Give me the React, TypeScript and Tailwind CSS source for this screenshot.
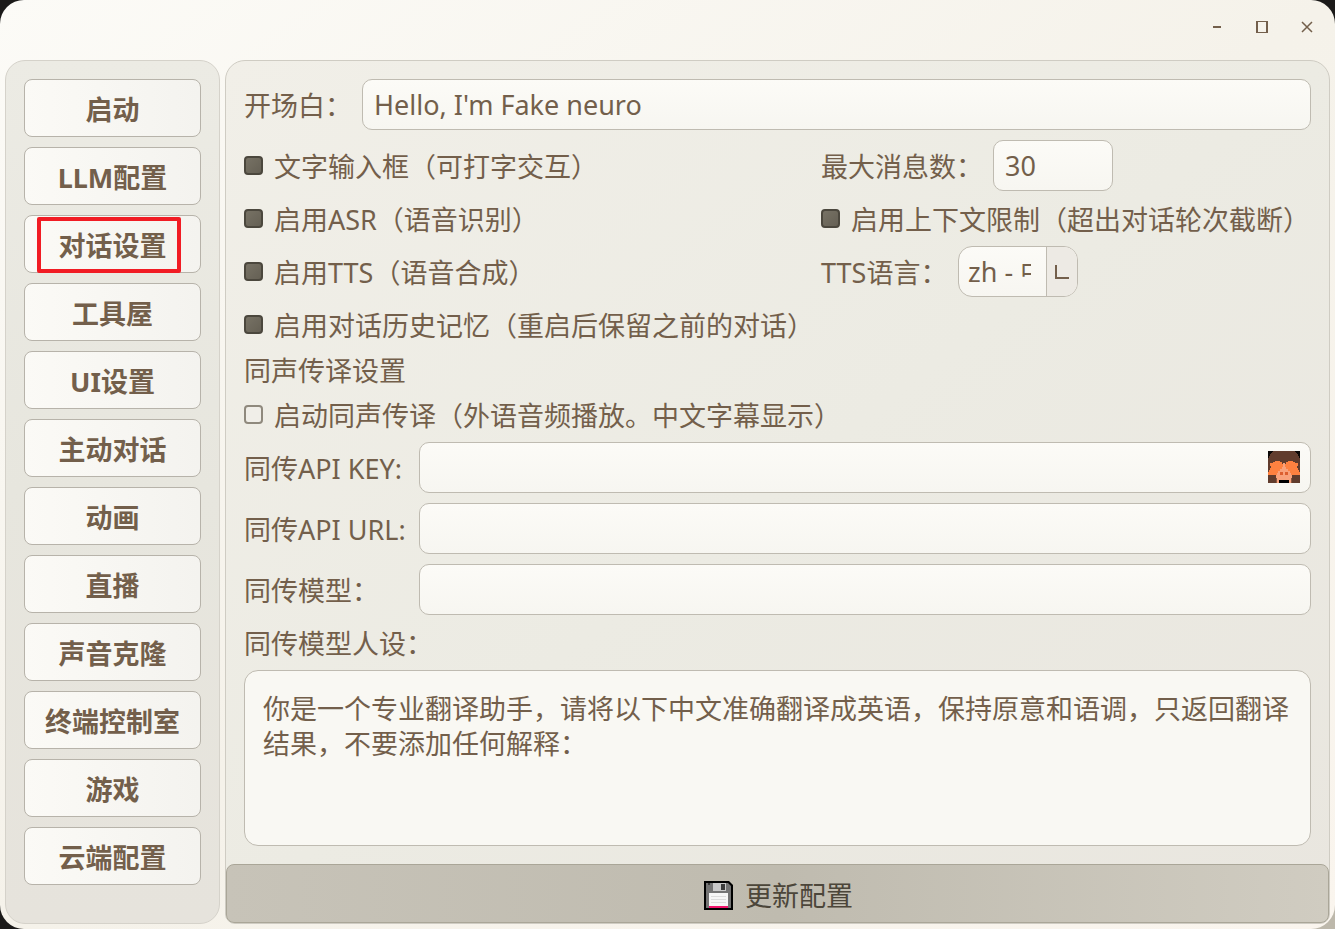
import { useState, type ReactNode } from "react";

const navItems = [
  "启动",
  "LLM配置",
  "对话设置",
  "工具屋",
  "UI设置",
  "主动对话",
  "动画",
  "直播",
  "声音克隆",
  "终端控制室",
  "游戏",
  "云端配置",
];

const fieldClass =
  "h-[51px] min-w-0 rounded-[10px] border border-[#bfbbb1] bg-linear-to-b from-[#fcfbf7] to-[#f7f6f1] px-[11px] outline-none";

function Check({ label, initial = false }: { label: string; initial?: boolean }) {
  const [on, setOn] = useState(initial);
  return (
    <label className="flex h-[35px] items-center gap-[11px] whitespace-nowrap">
      <input
        type="checkbox"
        checked={on}
        onChange={() => setOn(!on)}
        className="size-[19px] shrink-0 appearance-none rounded-[4px] border-2 border-[#8f897d] bg-[#f0eee8] checked:border-[#4b473d] checked:bg-linear-to-br checked:from-[#777265] checked:to-[#656054]"
      />
      <span className="pt-[2px]">{label}</span>
    </label>
  );
}

function LabeledField({ id, label, children }: { id: string; label: string; children: ReactNode }) {
  return (
    <div className="flex items-center">
      <label htmlFor={id} className="w-[175px] shrink-0 pt-[2px] whitespace-nowrap">
        {label}
      </label>
      {children}
    </div>
  );
}

function MonkeyIcon() {
  return (
    <svg viewBox="0 0 32 32" className="size-8" shapeRendering="crispEdges" aria-hidden="true">
      <rect width="32" height="32" fill="#613c2d" />
      <path d="M0 0h5v1H4v1H3v1H2v2H1v2H0zM32 0h-5v1h1v1h1v1h1v2h1v2h1z" fill="#0b0807" />
      <path d="M13 13h2v-1h2v1h2v4h2v3h2v4h1v8H8v-8h1v-4h2v-3h2z" fill="#f9a27c" />
      <path d="M5 11h2v-1h5v1h2v2h1v3h-1v2h-2v2h-2v2H9v2H0v-3h1v-2h1v-2h1v-2H2v-3h3z" fill="#ff8140" />
      <path d="M27 11h-2v-1h-5v1h-2v2h-1v3h1v2h2v2h2v2h1v2h9v-3h-1v-2h-1v-2h-1v-2h1v-3h-3z" fill="#ff8140" />
      <path d="M12 21h3v3h-3zM17 21h3v3h-3z" fill="#dc5f30" />
      <path d="M11 29h10v3H11z" fill="#000" />
      <path d="M8 27h1v5H8zM23 27h1v5h-1z" fill="#8a563e" />
    </svg>
  );
}

function FloppyIcon() {
  return (
    <svg viewBox="0 0 29 29" className="size-[29px]" aria-hidden="true">
      <path d="M0 0h25l4 4v25H0z" fill="#000" />
      <path d="M2 2h22l3 3v22H2z" fill="#747474" />
      <path d="M4 2h2v2H4z" fill="#3c3c3c" />
      <path d="M9 2h13v8H9z" fill="#c9c9c9" />
      <path d="M17 3h4v6h-4z" fill="#3c3c3c" />
      <path d="M5 12h19v13H5z" fill="#f6f6f6" />
      <path d="M7 15.5h15M7 18.5h15M7 21.5h15" stroke="#dcdcdc" />
      <path d="M5 25h19v2H5z" fill="#f0136b" />
    </svg>
  );
}

export default function App() {
  return (
    <div lang="zh-CN" className="bg-linear-to-br from-[#1b1a19] from-95% to-[#bdb8ab] to-98%">
      <div className="flex min-h-screen flex-col rounded-[24px] bg-linear-to-br from-[#fcfbf7] via-[#f5f2ea] to-[#faf5ee] font-['Noto_Sans','Noto_Sans_CJK_SC',sans-serif] text-[27px] leading-[35px] text-[#735f4b]">
        <header className="flex h-[60px] shrink-0 items-start justify-end pt-1 pr-[6px]">
          <button aria-label="最小化" className="flex h-[45px] w-[45px] items-center justify-center">
            <svg viewBox="0 0 12 12" className="size-3" shapeRendering="crispEdges">
              <path d="M2 5h8v2H2z" fill="currentColor" />
            </svg>
          </button>
          <button aria-label="最大化" className="flex h-[45px] w-[45px] items-center justify-center">
            <svg viewBox="0 0 12 12" className="size-3" shapeRendering="crispEdges">
              <path d="M0 0h12v12H0zM2 1v10h8V1z" fillRule="evenodd" fill="currentColor" />
            </svg>
          </button>
          <button aria-label="关闭" className="flex h-[45px] w-[45px] items-center justify-center">
            <svg viewBox="0 0 12 12" className="size-3">
              <path d="M1 1l10 10M11 1L1 11" stroke="currentColor" strokeWidth="1.5" />
            </svg>
          </button>
        </header>

        <div className="flex grow gap-[5px] px-[5px] pb-[5px]">
          <nav className="flex w-[215px] shrink-0 flex-col gap-[10px] rounded-[20px] border border-[#d5d2ca] bg-linear-to-b from-[#ecebe4] via-[#e7e6de] to-[#e6e3dc] p-[18px]">
            {navItems.map((item) => (
              <button
                key={item}
                className="relative h-[58px] rounded-[8px] border border-[#b7b3aa] bg-linear-to-r from-[#fbfaf6] to-[#f4f3ef] pt-[2px] font-bold whitespace-nowrap"
              >
                {item}
                {item === "对话设置" && (
                  <span className="absolute top-[1px] right-[19px] -bottom-[1px] left-[12px] rounded-[2px] border-4 border-[#f11c24]" />
                )}
              </button>
            ))}
          </nav>

          <main className="flex min-w-0 grow flex-col rounded-t-[20px] rounded-b-[10px] border border-[#cfccc3] bg-linear-to-br from-[#f1efe8] via-[#ecebe3] to-[#e9e6df]">
            <form className="flex grow flex-col gap-[10px] p-[18px]" onSubmit={(e) => e.preventDefault()}>
              <div className="flex items-center">
                <label htmlFor="greeting" className="w-[118px] shrink-0 pt-[2px]">
                  开场白：
                </label>
                <input id="greeting" defaultValue="Hello, I'm Fake neuro" className={`${fieldClass} grow`} />
              </div>

              <div className="grid grid-cols-[577fr_490fr] items-center gap-y-[10px]">
                <Check label="文字输入框（可打字交互）" initial />
                <div className="flex items-center">
                  <label htmlFor="limit" className="w-[172px] pt-[2px] whitespace-nowrap">
                    最大消息数：
                  </label>
                  <input id="limit" defaultValue="30" className={`${fieldClass} w-[120px]`} />
                </div>
                <Check label="启用ASR（语音识别）" initial />
                <Check label="启用上下文限制（超出对话轮次截断）" initial />
                <Check label="启用TTS（语音合成）" initial />
                <div className="flex items-center">
                  <label htmlFor="lang" className="w-[137px] pt-[2px] whitespace-nowrap">
                    TTS语言：
                  </label>
                  <div className="relative flex h-[51px] w-[120px] overflow-hidden rounded-[14px] border border-[#bfbbb1] bg-linear-to-b from-[#fcfbf7] to-[#f7f6f1]">
                    <select id="lang" className="w-full appearance-none pr-[46px] pl-[9px] outline-none">
                      <option>zh - 中文</option>
                      <option>en - 英语</option>
                      <option>ja - 日语</option>
                    </select>
                    <span className="pointer-events-none absolute inset-y-0 right-0 flex w-[31px] items-center justify-center border-l border-[#bfbbb1] bg-[#edeae4]">
                      <span className="size-[14px] border-b-2 border-l-2 border-[#735f4b]" />
                    </span>
                  </div>
                </div>
              </div>

              <Check label="启用对话历史记忆（重启后保留之前的对话）" initial />
              <h2 className="h-[35px] pt-px">同声传译设置</h2>
              <Check label="启动同声传译（外语音频播放。中文字幕显示）" />

              <LabeledField id="key" label="同传API KEY:">
                <div className="relative flex min-w-0 grow">
                  <input id="key" className={`${fieldClass} grow pr-[52px]`} />
                  <button type="button" aria-label="显示密钥" className="absolute top-[9px] right-[11px]">
                    <MonkeyIcon />
                  </button>
                </div>
              </LabeledField>
              <LabeledField id="url" label="同传API URL:">
                <input id="url" className={`${fieldClass} grow`} />
              </LabeledField>
              <LabeledField id="model" label="同传模型：">
                <input id="model" className={`${fieldClass} grow`} />
              </LabeledField>

              <label htmlFor="persona" className="h-[35px] pt-px">
                同传模型人设：
              </label>
              <textarea
                id="persona"
                className="min-h-[120px] grow resize-none rounded-[14px] border border-[#bfbbb1] bg-[#f9f8f3] px-[18px] py-5 outline-none"
                defaultValue="你是一个专业翻译助手，请将以下中文准确翻译成英语，保持原意和语调，只返回翻译结果，不要添加任何解释："
              />
            </form>
            <button className="flex h-[59px] shrink-0 items-center justify-center gap-3 rounded-[8px] border border-[#aaa698] bg-linear-to-r from-[#c7c3b8] via-[#bfbbaf] to-[#d0ccc1] pt-[3px] pl-[2px] text-[#4c463a]">
              <FloppyIcon />
              更新配置
            </button>
          </main>
        </div>
      </div>
    </div>
  );
}
